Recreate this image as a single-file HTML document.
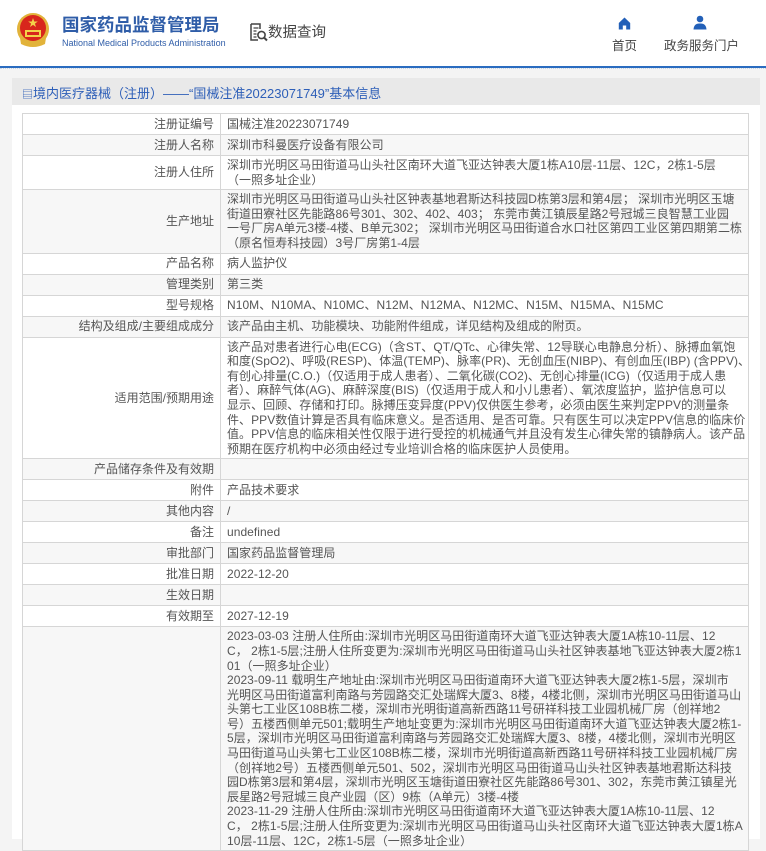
<!DOCTYPE html>
<html><head><meta charset="utf-8">
<style>
*{margin:0;padding:0;box-sizing:border-box}
html,body{width:766px;height:839px;overflow:hidden;background:#f4f4f4;font-family:"Liberation Sans","Noto Sans CJK SC",sans-serif;color:#555}
.hdr{position:absolute;left:0;top:0;width:766px;height:66px;background:#fff}
.blue{position:absolute;left:0;top:66px;width:766px;height:2px;background:#2a6cc0}
.dots{position:absolute;left:0;top:68px;width:766px;height:2px;border-top:1px dotted #c8d4e4}
.t1{position:absolute;left:62px;top:14px;font-size:17.5px;line-height:22px;font-weight:bold;color:#2f5da8;white-space:nowrap}
.t2{position:absolute;left:62px;top:38px;font-size:9px;line-height:11px;color:#2f5da8;white-space:nowrap}
.sq{position:absolute;left:268px;top:21px;font-size:14.5px;color:#444;white-space:nowrap}
.nav{position:absolute;top:35px;font-size:12.5px;color:#444;white-space:nowrap}
.panel{position:absolute;left:12px;top:78px;width:748px;height:761px;background:#fff}
.ph{position:absolute;left:0;top:0;width:748px;height:27px;background:#e9e9e9;font-size:13px;color:#2e5fb8;padding:5px 0 0 10px;white-space:nowrap}
table{position:absolute;left:10px;top:35px;width:726px;border-collapse:collapse;table-layout:fixed;font-size:12px;line-height:14.6px;letter-spacing:0.05px}
td{border:1px solid #d6d6d6;padding:2px 6px 2px 6px;vertical-align:middle;height:21px;white-space:nowrap;overflow:hidden}
td.l{text-align:right;color:#555;letter-spacing:0}
tr:nth-child(even) td{background:#f7f7f7}
</style></head><body>
<div class="hdr">
<svg style="position:absolute;left:15px;top:12px" width="36" height="36" viewBox="0 0 36 36">
<circle cx="18" cy="17" r="16" fill="#e2b33a"/><circle cx="18" cy="16" r="13" fill="#d8261c"/>
<polygon points="18,6 19.2,9.5 22.8,9.5 19.9,11.6 21,15 18,12.9 15,15 16.1,11.6 13.2,9.5 16.8,9.5" fill="#f3d34a"/>
<rect x="10" y="18" width="16" height="7" fill="#f3d34a"/><rect x="12" y="20" width="12" height="3" fill="#d8261c"/>
<path d="M5 26 Q18 36 31 26 L30 32 Q18 38 6 32Z" fill="#e2b33a"/>
</svg>
<div class="t1">国家药品监督管理局</div>
<div class="t2">National Medical Products Administration</div>
<svg style="position:absolute;left:249px;top:23px" width="19" height="19" viewBox="0 0 19 19">
<path d="M2 1h9v5M2 1v16h7" fill="none" stroke="#444" stroke-width="1.5"/>
<path d="M4.5 5h5M4.5 8h3M4.5 11h3M4.5 14h3" stroke="#444" stroke-width="1.3"/>
<circle cx="12.5" cy="12" r="3.6" fill="none" stroke="#444" stroke-width="1.6"/>
<path d="M15 14.5l3 3" stroke="#444" stroke-width="2"/>
</svg>
<div class="sq">数据查询</div>
<svg style="position:absolute;left:618px;top:17px" width="13" height="13" viewBox="0 0 13 13"><path d="M6.5 0.5L0.8 6v6.5h4v-4h3.4v4h4V6Z" fill="#2360b8"/></svg>
<div class="nav" style="left:612px">首页</div>
<svg style="position:absolute;left:693px;top:15px" width="14" height="15" viewBox="0 0 14 15"><circle cx="7" cy="4" r="3.3" fill="#2360b8"/><path d="M0.5 14.5Q1 8 7 8.5Q13 8 13.5 14.5Z" fill="#2360b8"/></svg>
<div class="nav" style="left:664px">政务服务门户</div>
</div>
<div class="blue"></div><div class="dots"></div>
<div class="panel">
<div class="ph"><span style="font-size:11px">▤</span>境内医疗器械（注册）——“国械注准20223071749”基本信息</div>
<table>
<colgroup><col style="width:198px"><col style="width:528px"></colgroup>
<tr><td class="l">注册证编号</td><td>国械注准20223071749</td></tr>
<tr><td class="l">注册人名称</td><td>深圳市科曼医疗设备有限公司</td></tr>
<tr><td class="l">注册人住所</td><td>深圳市光明区马田街道马山头社区南环大道飞亚达钟表大厦1栋A10层-11层、12C，2栋1-5层<br>（一照多址企业）</td></tr>
<tr><td class="l">生产地址</td><td>深圳市光明区马田街道马山头社区钟表基地君斯达科技园D栋第3层和第4层； 深圳市光明区玉塘<br>街道田寮社区先能路86号301、302、402、403； 东莞市黄江镇辰星路2号冠城三良智慧工业园<br>一号厂房A单元3楼-4楼、B单元302； 深圳市光明区马田街道合水口社区第四工业区第四期第二栋<br>（原名恒寿科技园）3号厂房第1-4层</td></tr>
<tr><td class="l">产品名称</td><td>病人监护仪</td></tr>
<tr><td class="l">管理类别</td><td>第三类</td></tr>
<tr><td class="l">型号规格</td><td>N10M、N10MA、N10MC、N12M、N12MA、N12MC、N15M、N15MA、N15MC</td></tr>
<tr><td class="l">结构及组成/主要组成成分</td><td>该产品由主机、功能模块、功能附件组成，详见结构及组成的附页。</td></tr>
<tr><td class="l">适用范围/预期用途</td><td>该产品对患者进行心电(ECG)（含ST、QT/QTc、心律失常、12导联心电静息分析）、脉搏血氧饱<br>和度(SpO2)、呼吸(RESP)、体温(TEMP)、脉率(PR)、无创血压(NIBP)、有创血压(IBP) (含PPV)、<br>有创心排量(C.O.)（仅适用于成人患者）、二氧化碳(CO2)、无创心排量(ICG)（仅适用于成人患<br>者）、麻醉气体(AG)、麻醉深度(BIS)（仅适用于成人和小儿患者）、氧浓度监护，监护信息可以<br>显示、回顾、存储和打印。脉搏压变异度(PPV)仅供医生参考，必须由医生来判定PPV的测量条<br>件、PPV数值计算是否具有临床意义。是否适用、是否可靠。只有医生可以决定PPV信息的临床价<br>值。PPV信息的临床相关性仅限于进行受控的机械通气并且没有发生心律失常的镇静病人。该产品<br>预期在医疗机构中必须由经过专业培训合格的临床医护人员使用。</td></tr>
<tr><td class="l">产品储存条件及有效期</td><td></td></tr>
<tr><td class="l">附件</td><td>产品技术要求</td></tr>
<tr><td class="l">其他内容</td><td>/</td></tr>
<tr><td class="l">备注</td><td>undefined</td></tr>
<tr><td class="l">审批部门</td><td>国家药品监督管理局</td></tr>
<tr><td class="l">批准日期</td><td>2022-12-20</td></tr>
<tr><td class="l">生效日期</td><td></td></tr>
<tr><td class="l">有效期至</td><td>2027-12-19</td></tr>
<tr><td class="l"></td><td style="vertical-align:top">2023-03-03 注册人住所由:深圳市光明区马田街道南环大道飞亚达钟表大厦1A栋10-11层、12<br>C， 2栋1-5层;注册人住所变更为:深圳市光明区马田街道马山头社区钟表基地飞亚达钟表大厦2栋1<br>01（一照多址企业）<br>2023-09-11 载明生产地址由:深圳市光明区马田街道南环大道飞亚达钟表大厦2栋1-5层，深圳市<br>光明区马田街道富利南路与芳园路交汇处瑞辉大厦3、8楼，4楼北侧，深圳市光明区马田街道马山<br>头第七工业区108B栋二楼，深圳市光明街道高新西路11号研祥科技工业园机械厂房（创祥地2<br>号）五楼西侧单元501;载明生产地址变更为:深圳市光明区马田街道南环大道飞亚达钟表大厦2栋1-<br>5层，深圳市光明区马田街道富利南路与芳园路交汇处瑞辉大厦3、8楼，4楼北侧，深圳市光明区<br>马田街道马山头第七工业区108B栋二楼，深圳市光明街道高新西路11号研祥科技工业园机械厂房<br>（创祥地2号）五楼西侧单元501、502，深圳市光明区马田街道马山头社区钟表基地君斯达科技<br>园D栋第3层和第4层，深圳市光明区玉塘街道田寮社区先能路86号301、302，东莞市黄江镇星光<br>辰星路2号冠城三良产业园（区）9栋（A单元）3楼-4楼<br>2023-11-29 注册人住所由:深圳市光明区马田街道南环大道飞亚达钟表大厦1A栋10-11层、12<br>C， 2栋1-5层;注册人住所变更为:深圳市光明区马田街道马山头社区南环大道飞亚达钟表大厦1栋A<br>10层-11层、12C，2栋1-5层（一照多址企业）</td></tr>
</table>
</div>
</body></html>
